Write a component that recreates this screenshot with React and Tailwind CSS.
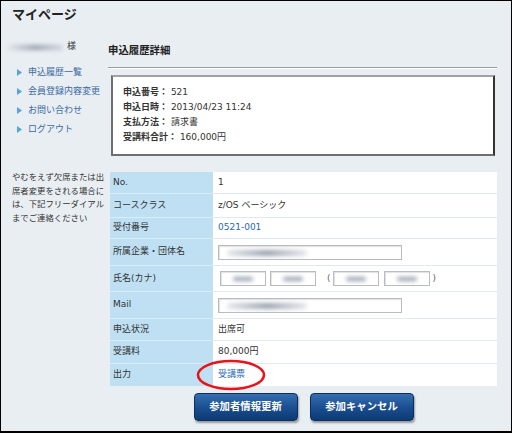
import React from 'react'

const font = { fontFamily: '"DejaVu Sans", "Noto Sans CJK JP", sans-serif' }

function Blur({ className }) {
  return <div className={`rounded-full blur-[2px] ${className}`} />
}

function Field({ w = 'w-[184px]', children }) {
  return (
    <div className={`relative h-[15px] ${w} overflow-hidden border border-[#b9bcbf] bg-white shadow-[inset_1px_1px_1px_rgba(0,0,0,0.12)]`}>
      {children}
    </div>
  )
}

function Tri() {
  return (
    <svg width="5" height="7" viewBox="0 0 5 7" className="shrink-0">
      <path d="M0 0 L5 3.5 L0 7 Z" fill="#5aa2dc" />
    </svg>
  )
}

const rows = [
  { label: 'No.', h: 'h-[21px]', value: <span>1</span> },
  { label: 'コースクラス', h: 'h-[24px]', value: <span>z/OS ベーシック</span> },
  { label: '受付番号', h: 'h-[21px]', value: <span className="text-[#2a68b0]">0521-001</span> },
  {
    label: '所属企業・団体名',
    h: 'h-[27px]',
    value: (
      <Field>
        <Blur className="absolute left-[8px] top-[4px] h-[6px] w-[80px] bg-gradient-to-r from-gray-200 via-gray-400 to-gray-200" />
      </Field>
    ),
  },
  {
    label: '氏名(カナ)',
    h: 'h-[26px]',
    value: (
      <div className="flex items-center">
        <div className="ml-[2px]">
          <Field w="w-[46px]">
            <Blur className="absolute left-[12px] top-[5px] h-[4px] w-[20px] bg-gray-400" />
          </Field>
        </div>
        <div className="ml-[4px]">
          <Field w="w-[46px]">
            <Blur className="absolute left-[12px] top-[5px] h-[4px] w-[20px] bg-gray-400" />
          </Field>
        </div>
        <span className="ml-[11px] mr-[2px] text-[#666]">(</span>
        <Field w="w-[46px]">
          <Blur className="absolute left-[12px] top-[5px] h-[4px] w-[20px] bg-gray-400" />
        </Field>
        <div className="ml-[5px]">
          <Field w="w-[46px]">
            <Blur className="absolute left-[12px] top-[5px] h-[4px] w-[20px] bg-gray-400" />
          </Field>
        </div>
        <span className="ml-[3px] text-[#666]">)</span>
      </div>
    ),
  },
  {
    label: 'Mail',
    h: 'h-[27px]',
    value: (
      <Field>
        <Blur className="absolute left-[8px] top-[4px] h-[6px] w-[80px] bg-gradient-to-r from-gray-200 via-gray-400 to-gray-200" />
      </Field>
    ),
  },
  { label: '申込状況', h: 'h-[22px]', value: <span>出席可</span> },
  { label: '受講料', h: 'h-[23px]', value: <span>80,000円</span> },
  { label: '出力', h: 'h-[23px]', value: <span className="text-[#2a68b0]">受講票</span> },
]

const links = ['申込履歴一覧', '会員登録内容変更', 'お問い合わせ', 'ログアウト']

export default function App() {
  return (
    <div className="relative h-[434px] w-[512px] overflow-hidden bg-white text-[#333]" style={font}>
      <div className="h-[433px] border border-b-2 border-black bg-[#e9eef2]">
        {/* header */}
        <div className="pl-[11px] pt-[6px] text-[13px] font-bold leading-[15px] text-[#222]">マイページ</div>

        <div className="flex">
          {/* sidebar */}
          <div className="w-[107px] shrink-0">
            <div className="mt-[19px] flex h-[12px] items-center pl-[6px]">
              <Blur className="h-[5px] w-[56px] bg-gradient-to-r from-gray-200 via-gray-400 to-gray-300" />
              <span className="ml-[4px] text-[9px]">様</span>
            </div>
            <ul className="mt-[10px]">
              {links.map((l) => (
                <li key={l} className="flex h-[19px] items-center gap-[6px] pl-[16px] text-[9px] text-[#3a6aa6]">
                  <Tri />
                  <span className="whitespace-nowrap">{l}</span>
                </li>
              ))}
            </ul>
            <p className="mt-[32px] whitespace-nowrap pl-[11px] text-[8.4px] leading-[13.5px] text-[#333]">
              やむをえず欠席または出
              <br />
              席者変更をされる場合に
              <br />
              は、下記フリーダイアル
              <br />
              までご連絡ください
            </p>
          </div>

          {/* main */}
          <div className="flex-1 pr-[14px]">
            <h2 className="mt-[21px] text-[10.4px] font-bold leading-[14px] text-[#222]">申込履歴詳細</h2>
            <div className="mt-[10px] border-t border-[#9c9c9c] shadow-[0_1px_0_#fff]" />

            <div className="ml-[3px] mr-[2px] mt-[7px] h-[81px] border-2 border-[#6f6f6f] border-r-[#333] border-t-[#a0a0a0] bg-white pl-[10px] pt-[8px] text-[9px] leading-[15px]">
              <div><span className="font-bold">申込番号：</span> 521</div>
              <div><span className="font-bold">申込日時：</span> 2013/04/23 11:24</div>
              <div><span className="font-bold">支払方法：</span> 請求書</div>
              <div><span className="font-bold">受講料合計：</span> 160,000円</div>
            </div>

            <div className="ml-[2px] mt-[16px] text-[9px]">
              {rows.map((r, i) => (
                <div key={r.label} className={`flex ${r.h} ${i ? 'border-t border-[#e3e8ec]' : ''}`}>
                  <div className={`flex w-[103px] shrink-0 items-center bg-[#bfe0f3] pl-[3px] ${i ? '-mt-px border-t border-[#d9eefa]' : ''}`}>
                    {r.label}
                  </div>
                  <div className="flex flex-1 items-center bg-white pl-[5px]">{r.value}</div>
                </div>
              ))}
            </div>

            <div className="ml-[2px] mt-[7px] flex justify-center gap-[12px]">
              {['参加者情報更新', '参加キャンセル'].map((t) => (
                <button
                  key={t}
                  className="h-[28px] w-[104px] rounded-[4px] border border-[#0b2f5e] bg-gradient-to-b from-[#3570b2] via-[#1b4f90] to-[#0c3a75] text-[10.4px] font-bold text-white shadow-[1px_2px_2px_rgba(0,0,0,0.35)]"
                >
                  {t}
                </button>
              ))}
            </div>
          </div>
        </div>
      </div>

      {/* red marker around 受講票 */}
      <svg className="absolute left-[196px] top-[359px]" width="70" height="32" viewBox="0 0 70 32">
        <ellipse cx="35" cy="16" rx="33" ry="14" fill="none" stroke="#e8141b" strokeWidth="2.6" />
      </svg>
    </div>
  )
}
